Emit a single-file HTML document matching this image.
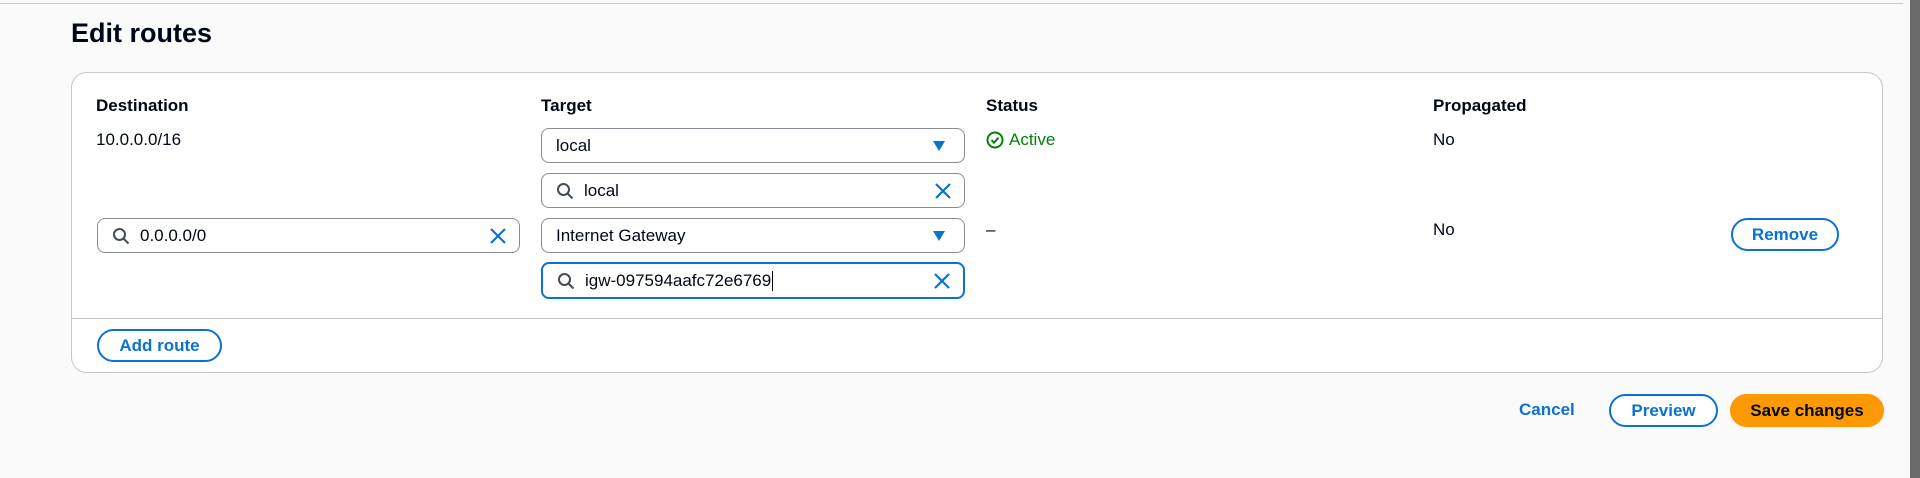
<!DOCTYPE html>
<html><head><style>
*{box-sizing:border-box;margin:0;padding:0}
body{width:1920px;height:478px;background:#fafafa;font-family:"Liberation Sans",sans-serif;color:#000716;position:relative;overflow:hidden;font-size:17px}
.a{position:absolute}
.topline{left:0;top:3px;width:1903px;height:1px;background:#c6c6cd}
.sb{left:1910px;top:0;width:10px;height:478px;background:#6b6b6b}
h1{position:absolute;left:71px;top:18px;font-size:27px;font-weight:700}
.card{left:71px;top:72px;width:1812px;height:301px;background:#fff;border:1px solid #c6c6cd;border-radius:16px}
.div{left:71px;top:318px;width:1812px;height:1px;background:#c6c6cd}
.hd{font-weight:700;font-size:17px}
.in{border:1px solid #8c8c94;border-radius:8px;background:#fff;height:35px;display:flex;align-items:center;padding:0 14px;font-size:17px}
.foc{border:2px solid #0972d3}
.btn{border:2px solid #0972d3;border-radius:20px;color:#0972d3;font-weight:700;display:flex;align-items:center;justify-content:center;font-size:17px;background:#fff}
.mag{margin-right:10px;flex:none}
.x{position:absolute;right:12px;top:50%;transform:translateY(-50%)}
.caret{position:absolute;right:18px;top:50%;transform:translateY(-50%)}
</style></head><body>
<div class="a topline"></div>
<div class="a sb"></div>
<h1>Edit routes</h1>
<div class="a card"></div>
<div class="a div"></div>
<div class="a hd" style="left:96px;top:96px">Destination</div>
<div class="a hd" style="left:541px;top:96px">Target</div>
<div class="a hd" style="left:986px;top:96px">Status</div>
<div class="a hd" style="left:1433px;top:96px">Propagated</div>
<div class="a" style="left:96px;top:130px">10.0.0.0/16</div>
<div class="a" style="left:986px;top:130px;color:#037f0c;display:flex;align-items:center"><svg width="18" height="18" viewBox="0 0 18 18" style="margin-right:5px"><circle cx="9" cy="9" r="7.5" fill="none" stroke="#037f0c" stroke-width="2"/><path d="M5.5 9.2l2.5 2.5 4.5-5" fill="none" stroke="#037f0c" stroke-width="2"/></svg>Active</div>
<div class="a" style="left:1433px;top:130px">No</div>
<div class="a" style="left:986px;top:220px">–</div>
<div class="a" style="left:1433px;top:220px">No</div>

<div class="a in" style="left:541px;top:128px;width:424px">local<svg class="caret" width="14" height="12" viewBox="0 0 14 12"><path d="M1 1h12L7 11z" fill="#0972d3"/></svg></div>
<div class="a in" style="left:541px;top:173px;width:424px"><svg class="mag" width="18" height="18" viewBox="0 0 18 18"><circle cx="7.5" cy="7.5" r="5.5" fill="none" stroke="#414d5c" stroke-width="2"/><path d="M11.5 11.5l5 5" stroke="#414d5c" stroke-width="2"/></svg>local<svg class="x" width="18" height="18" viewBox="0 0 18 18"><path d="M2 2l14 14M16 2L2 16" stroke="#0972d3" stroke-width="2.2"/></svg></div>
<div class="a in" style="left:97px;top:218px;width:423px"><svg class="mag" width="18" height="18" viewBox="0 0 18 18"><circle cx="7.5" cy="7.5" r="5.5" fill="none" stroke="#414d5c" stroke-width="2"/><path d="M11.5 11.5l5 5" stroke="#414d5c" stroke-width="2"/></svg>0.0.0.0/0<svg class="x" width="18" height="18" viewBox="0 0 18 18"><path d="M2 2l14 14M16 2L2 16" stroke="#0972d3" stroke-width="2.2"/></svg></div>
<div class="a in" style="left:541px;top:218px;width:424px">Internet Gateway<svg class="caret" width="14" height="12" viewBox="0 0 14 12"><path d="M1 1h12L7 11z" fill="#0972d3"/></svg></div>
<div class="a in foc" style="left:541px;top:262px;width:424px;height:37px"><svg class="mag" width="18" height="18" viewBox="0 0 18 18"><circle cx="7.5" cy="7.5" r="5.5" fill="none" stroke="#414d5c" stroke-width="2"/><path d="M11.5 11.5l5 5" stroke="#414d5c" stroke-width="2"/></svg>igw-097594aafc72e6769<span style="display:inline-block;width:1px;height:20px;background:#000;margin-left:1px"></span><svg class="x" width="18" height="18" viewBox="0 0 18 18"><path d="M2 2l14 14M16 2L2 16" stroke="#0972d3" stroke-width="2.2"/></svg></div>

<div class="a btn" style="left:1731px;top:218px;width:108px;height:33px">Remove</div>
<div class="a btn" style="left:97px;top:329px;width:125px;height:33px">Add route</div>
<div class="a" style="left:1519px;top:400px;color:#0972d3;font-weight:700">Cancel</div>
<div class="a btn" style="left:1609px;top:394px;width:109px;height:33px">Preview</div>
<div class="a btn" style="left:1730px;top:394px;width:154px;height:33px;background:#ff9900;border-color:#ff9900;color:#000716">Save changes</div>
</body></html>
